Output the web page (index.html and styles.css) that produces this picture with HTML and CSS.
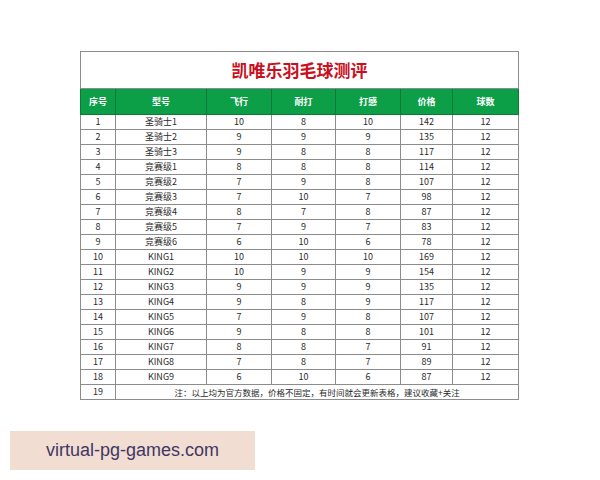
FILE: index.html
```html
<!DOCTYPE html>
<html>
<head>
<meta charset="utf-8">
<link rel="stylesheet" href="styles.css">
</head>
<body>
<table class="sheet">
<colgroup>
<col class="c1"><col class="c2"><col class="c3"><col class="c4"><col class="c5"><col class="c6"><col class="c7">
</colgroup>
<tr class="title-row"><td colspan="7" class="title">凯唯乐羽毛球测评</td></tr>
<tr class="head"><th>序号</th><th>型号</th><th>飞行</th><th>耐打</th><th>打感</th><th>价格</th><th>球数</th></tr>
<tr><td>1</td><td>圣骑士1</td><td>10</td><td>8</td><td>10</td><td>142</td><td>12</td></tr>
<tr><td>2</td><td>圣骑士2</td><td>9</td><td>9</td><td>9</td><td>135</td><td>12</td></tr>
<tr><td>3</td><td>圣骑士3</td><td>9</td><td>8</td><td>8</td><td>117</td><td>12</td></tr>
<tr><td>4</td><td>竞赛级1</td><td>8</td><td>8</td><td>8</td><td>114</td><td>12</td></tr>
<tr><td>5</td><td>竞赛级2</td><td>7</td><td>9</td><td>8</td><td>107</td><td>12</td></tr>
<tr><td>6</td><td>竞赛级3</td><td>7</td><td>10</td><td>7</td><td>98</td><td>12</td></tr>
<tr><td>7</td><td>竞赛级4</td><td>8</td><td>7</td><td>8</td><td>87</td><td>12</td></tr>
<tr><td>8</td><td>竞赛级5</td><td>7</td><td>9</td><td>7</td><td>83</td><td>12</td></tr>
<tr><td>9</td><td>竞赛级6</td><td>6</td><td>10</td><td>6</td><td>78</td><td>12</td></tr>
<tr><td>10</td><td>KING1</td><td>10</td><td>10</td><td>10</td><td>169</td><td>12</td></tr>
<tr><td>11</td><td>KING2</td><td>10</td><td>9</td><td>9</td><td>154</td><td>12</td></tr>
<tr><td>12</td><td>KING3</td><td>9</td><td>9</td><td>9</td><td>135</td><td>12</td></tr>
<tr><td>13</td><td>KING4</td><td>9</td><td>8</td><td>9</td><td>117</td><td>12</td></tr>
<tr><td>14</td><td>KING5</td><td>7</td><td>9</td><td>8</td><td>107</td><td>12</td></tr>
<tr><td>15</td><td>KING6</td><td>9</td><td>8</td><td>8</td><td>101</td><td>12</td></tr>
<tr><td>16</td><td>KING7</td><td>8</td><td>8</td><td>7</td><td>91</td><td>12</td></tr>
<tr><td>17</td><td>KING8</td><td>7</td><td>8</td><td>7</td><td>89</td><td>12</td></tr>
<tr><td>18</td><td>KING9</td><td>6</td><td>10</td><td>6</td><td>87</td><td>12</td></tr>
<tr><td>19</td><td colspan="6" class="note">注：以上均为官方数据，价格不固定，有时间就会更新表格，建议收藏+关注</td></tr>
</table>
<div class="mark">virtual-pg-games.com</div>
</body>
</html>
```
FILE: styles.css
```css
html, body {
  margin: 0;
  padding: 0;
  background: #ffffff;
}
body {
  font-family: "Noto Sans CJK SC", "Liberation Sans", sans-serif;
}
.sheet {
  border-collapse: collapse;
  table-layout: fixed;
  width: 438px;
  margin: 51px 0 0 80px;
  border: 1px solid #9a9a9a;
}
.c1 { width: 35px; }
.c2 { width: 91px; }
.c3 { width: 65px; }
.c4 { width: 64px; }
.c5 { width: 65px; }
.c6 { width: 52px; }
.c7 { width: 66px; }
.sheet td, .sheet th {
  border: 1px solid #8c8c8c;
  padding: 0;
  text-align: center;
  vertical-align: middle;
  font-size: 9px;
  line-height: 12px;
  height: 14px;
  color: #2b2b2b;
  font-weight: normal;
  white-space: nowrap;
}
.sheet td.note {
  font-size: 8.5px;
}
.sheet .title-row td {
  height: 36px;
  font-size: 17px;
  line-height: 22px;
  font-weight: bold;
  color: #c8101e;
  border-bottom: 1px solid #8c8c8c;
}
.sheet .head th {
  height: 25px;
  background: #0c9f48;
  color: #ffffff;
  font-weight: bold;
  font-size: 9px;
  border-color: #0b7a38;
}
.mark {
  margin: 31px 0 0 10px;
  width: 245px;
  height: 39px;
  background: #f2ddd3;
  color: #3e3763;
  font-family: "Liberation Sans", "Noto Sans", sans-serif;
  font-size: 18px;
  line-height: 39px;
  padding-left: 36px;
  box-sizing: border-box;
}
```
